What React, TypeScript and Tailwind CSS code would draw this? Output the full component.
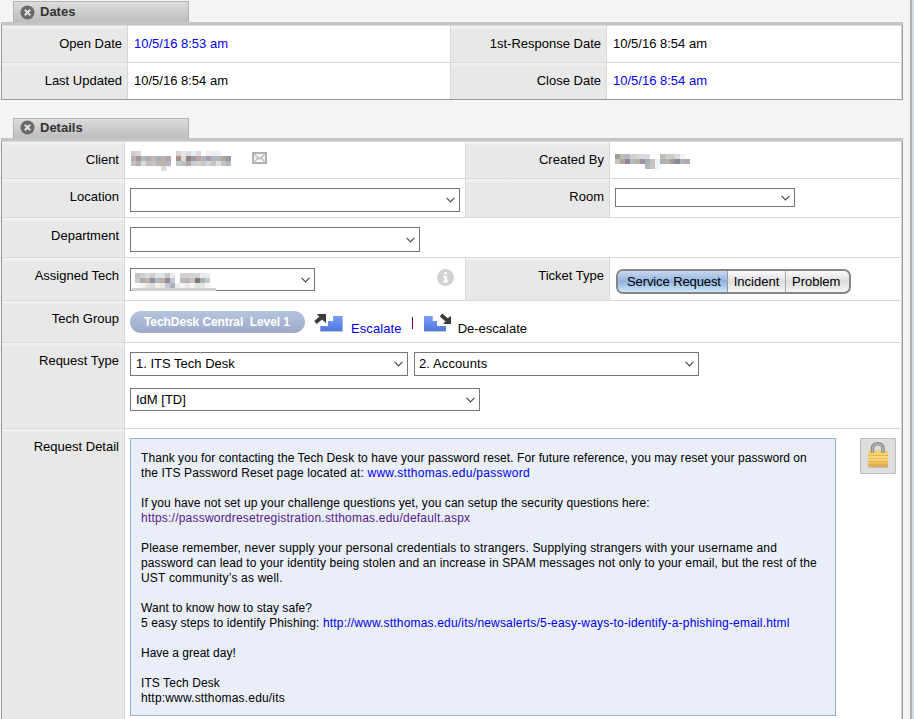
import React from "react";
import { clsx } from "clsx";

const LINK = "text-[#0000ee]";

function Tab({ title, tall }: { title: string; tall?: boolean }) {
  return (
    <div
      className={clsx(
        "ml-3 flex w-[176px] items-center border border-b-0 border-[#b4b4b4] bg-linear-to-b from-[#dcdcdc] to-[#bdbdbd] pl-[6px]",
        tall ? "h-[21px]" : "h-[20px] pb-[2px]",
      )}
    >
      <svg width="15" height="15" viewBox="0 0 15 15" className="shrink-0">
        <circle cx="7.5" cy="7.5" r="7" fill="#6a6a6a" />
        <path d="M4.8 4.8l5.4 5.4M10.2 4.8l-5.4 5.4" stroke="#e2e2e2" strokeWidth="2" />
      </svg>
      <span className="ml-[5px] text-[13px] leading-[16px] font-bold text-[#333]">{title}</span>
    </div>
  );
}

function Label({ children, className }: { children: React.ReactNode; className: string }) {
  return (
    <div
      className={clsx(
        "shrink-0 border-r border-r-[#d8d8d8] bg-[#e8e8e8] bg-linear-to-b from-[#f4f4f4] from-0% to-[#e8e8e8] to-[4px] text-right leading-[16px] whitespace-nowrap",
        className,
      )}
    >
      {children}
    </div>
  );
}

function Row({ children, className }: { children: React.ReactNode; className: string }) {
  return (
    <div className={clsx("flex border-r border-b border-[#d8d8d8] bg-white", className)}>{children}</div>
  );
}

function Chevron({ className }: { className?: string }) {
  return (
    <svg width="9" height="6" viewBox="0 0 9 6" fill="none" className={className}>
      <path d="M0.6 0.9L4.5 4.8L8.4 0.9" stroke="#4a4a4a" strokeWidth="1.2" />
    </svg>
  );
}

function Select({ children, className }: { children?: React.ReactNode; className: string }) {
  return (
    <div
      className={clsx(
        "flex shrink-0 items-center justify-between border border-[#777] bg-white pr-[4px] leading-[16px]",
        className,
      )}
    >
      <span>{children}</span>
      <Chevron />
    </div>
  );
}

function Mosaic({ rows, className }: { rows: string[][]; className?: string }) {
  return (
    <svg
      width={rows[0].length * 5}
      height={rows.length * 5}
      className={clsx("shrink-0", className)}
      shapeRendering="crispEdges"
    >
      {rows.map((r, y) =>
        r.map((c, x) => <rect key={`${x}-${y}`} x={x * 5} y={y * 5} width="5" height="5" fill={`#${c}`} />),
      )}
    </svg>
  );
}

const CLIENT = [
  "d0cbc9 dcd4d4 fff fff fff fff fff fff fff d6d6d6 e8e4e4 d8dce2 e2eef0 dcdce4 fff f2f2f2 e6eef0 f0f0f0 fff fff",
  "b8b0b0 a89498 a8bcc4 b8a8b4 c4b4b4 a4b0b8 c0b0b0 b4a4b4 fff a89484 dcdce0 948484 9c9ca8 c0a4a4 b4b4bc a89cb0 b8b4bc b0b8bc b4a49c 909cac",
  "c8c0c0 b8b0b4 d4dcdc c4bcc4 c8c0c0 bcb4b4 bcb8a0 b0b4c4 fff c0c8cc c4bcbc aca8a8 c8d0d4 d8d0c8 c8c4cc d4d4dc ccc0bc d8dcdc c0c4c8 b0b4bc",
  "fff fff fff fff fff fff d8dcdc f8fcff fff fff fff fff fff fff fff fff fff fff fff",
].map((r) => r.split(" "));

const CREATOR = [
  "a49c94 c0bcb4 b4b8c4 ccd0d4 d4d4d0 dcdcdc d8dce0 fff fff c0bcb4 c8ccd4 d4ccc4 d8dce4 f0f0f0 fff",
  "c8c4bc aca8a0 988498 b0c0c0 b8b0a0 9c90a8 a8b0b8 c8c0bc f0f4ff b0b0b0 b4b4b8 a09c90 8c889c b0b4bc b4a8b0",
  "fff fff fff fff fff fff b0b8b8 c8c4c4 eef2ff fff fff fff fff fff fff",
].map((r) => r.split(" "));

const TECH = [
  "c4c0bc ccd0d4 d8dce0 d0ccc8 e0e4e4 dce4e8 ccc8c0 e8ecf0 fff d0d0cc d4ccc8 d0d4d8 d8d0cc e8ecee e4ecee",
  "d0ccc8 a8b0b4 c0b4a8 9890a4 b0bcc4 c0b0a0 8890a4 c4c8d0 fff bcb8bc b4b4bc c8c4c0 88747c a8b4b4 c4ccd0",
  "fff f4f4f4 e8e4e0 dcdcdc f0ece8 e4e8e8 c8ccd0 a8b0b8 ececec f4f4f4 eee8e4 f4f4f4 dde4e8 e8e4e4 f4f4f4",
].map((r) => r.split(" "));

function Stairs({ down }: { down?: boolean }) {
  const id = down ? "stairs-down" : "stairs-up";
  return (
    <svg width="29" height="20" viewBox="0 0 29 20" className="shrink-0">
      <defs>
        <linearGradient id={id} x1="0" y1="0" x2="0" y2="1">
          <stop offset="0" stopColor="#7b9df5" />
          <stop offset="1" stopColor="#4f77dc" />
        </linearGradient>
      </defs>
      {down ? (
        <>
          <path d="M1 19V3h8.600v5h4.400v5h9v6z" fill="#9aa5b8" opacity=".6" />
          <path d="M1 18V3h8.600v5h4.400v5h9v5z" fill={`url(#${id})`} />
          <path d="M18 2l7 6" stroke="#3c3c3c" strokeWidth="3.800" />
          <path d="M28 11h-8l3-3 2-3 3-2z" fill="#3c3c3c" />
        </>
      ) : (
        <>
          <path d="M6 19v-6h8V8h5V3h9.500v16z" fill="#9aa5b8" opacity=".6" />
          <path d="M6.500 18v-5H14V8h5V3h9.500v15z" fill={`url(#${id})`} />
          <path d="M1.500 9.500l7-6" stroke="#3c3c3c" strokeWidth="3.800" />
          <path d="M3 1h9v9L8.500 7 5.500 4z" fill="#3c3c3c" />
        </>
      )}
    </svg>
  );
}

export default function App() {
  return (
    <div className="flex h-[719px] w-[914px] overflow-hidden bg-[#f4f4f4] font-['Liberation_Sans',Arial,sans-serif] text-[13px] text-black">
      <main className="w-[902px] shrink-0 pt-px pl-px">
        <Tab title="Dates" tall />
        <section className="w-[902px] border-t-[3px] border-t-[#c4c4c4]">
          <div className="border border-t-0 border-[#999]">
            <div className="h-px bg-[#dcdcdc]" />
            <Row className="h-[37px]">
              <Label className="w-[126px] pt-[10px] pr-[5px]">Open Date</Label>
              <div className={clsx("w-[322px] pt-[10px] pl-[6px] leading-[16px]", LINK)}>10/5/16 8:53 am</div>
              <Label className="w-[157px] border-l border-l-[#d8d8d8] pt-[10px] pr-[5px]">1st-Response Date</Label>
              <div className="pt-[10px] pl-[6px] leading-[16px]">10/5/16 8:54 am</div>
            </Row>
            <Row className="h-[36px] border-b-0">
              <Label className="w-[126px] pt-[10px] pr-[5px]">Last Updated</Label>
              <div className="w-[322px] pt-[10px] pl-[6px] leading-[16px]">10/5/16 8:54 am</div>
              <Label className="w-[157px] border-l border-l-[#d8d8d8] pt-[10px] pr-[5px]">Close Date</Label>
              <div className={clsx("pt-[10px] pl-[6px] leading-[16px]", LINK)}>10/5/16 8:54 am</div>
            </Row>
          </div>
        </section>

        <div className="h-[18px]" />
        <Tab title="Details" />
        <section className="w-[902px] border-t-[3px] border-t-[#c4c4c4]">
          <div className="border-x border-[#999]">
            <div className="h-px bg-[#dcdcdc]" />
            <Row className="h-[37px]">
              <Label className="w-[123px] pt-[10px] pr-[5px]">Client</Label>
              <div className="flex w-[340px] items-start pl-[6px]">
                <Mosaic rows={CLIENT} className="mt-[9px]" />
                <svg width="15" height="12" viewBox="0 0 15 12" className="mt-[10px] ml-[21px]">
                  <rect x="1" y="1" width="13" height="10" fill="#f4f4f4" stroke="#b0b0b0" strokeWidth="2" />
                  <path d="M2.500 2.500l5 4.500 5-4.500M2.500 9.500l3.500-3.500M12.500 9.500L9 6" fill="none" stroke="#b4b4b4" strokeWidth="1.100" />
                </svg>
              </div>
              <Label className="w-[145px] border-l border-l-[#d8d8d8] pt-[10px] pr-[5px]">Created By</Label>
              <Mosaic rows={CREATOR} className="mt-[12px] ml-[5px]" />
            </Row>
            <Row className="h-[39px]">
              <Label className="w-[123px] pt-[10px] pr-[5px]">Location</Label>
              <div className="w-[340px] pt-[9px] pl-[5px]">
                <Select className="h-[24px] w-[330px]" />
              </div>
              <Label className="w-[145px] border-l border-l-[#d8d8d8] pt-[10px] pr-[5px]">Room</Label>
              <div className="pt-[9px] pl-[5px]">
                <Select className="h-[19px] w-[180px]" />
              </div>
            </Row>
            <Row className="h-[40px]">
              <Label className="w-[123px] pt-[10px] pr-[5px]">Department</Label>
              <div className="pt-[9px] pl-[5px]">
                <Select className="h-[25px] w-[290px]" />
              </div>
            </Row>
            <Row className="h-[43px]">
              <Label className="w-[123px] pt-[10px] pr-[5px]">Assigned Tech</Label>
              <div className="flex w-[340px] items-start pt-[10px] pl-[5px]">
                <div className="flex h-[23px] w-[185px] items-start justify-between border border-[#777] pr-[4px]">
                  <div className="ml-px h-[22px] w-[84px] border-b-[3px] border-[#d2d2d2] pt-[4px] pl-[3px]">
                    <Mosaic rows={TECH} />
                  </div>
                  <Chevron className="mt-[8px]" />
                </div>
                <svg width="17" height="17" viewBox="0 0 17 17" className="mt-px ml-[122px]">
                  <circle cx="8.5" cy="8.5" r="8.500" fill="#d2d2d2" />
                  <path d="M7.300 3h2.700v2.200H7.300zM6 6.800h4V12h1.200v1.400H6V12h1.300V8.200H6z" fill="#fff" />
                </svg>
              </div>
              <Label className="w-[145px] border-l border-l-[#d8d8d8] pt-[10px] pr-[5px]">Ticket Type</Label>
              <div className="pt-[11px] pl-[6px]">
                <div className="flex h-[25px] w-[235px] overflow-hidden rounded-[7px] border-2 border-[#858585] bg-linear-to-b from-[#fafafa] via-[#dedede] to-[#f5f5f5] leading-[21px] whitespace-nowrap">
                  <div className="w-[110px] border-r border-[#999] bg-linear-to-b from-[#c9d7ee] via-[#92b3dd] to-[#cbe7f8] pl-[9px] tracking-[-0.1px]">
                    Service Request
                  </div>
                  <div className="w-[58px] border-r border-[#aaa] text-center">Incident</div>
                  <div className="flex-1 pl-[6px]">Problem</div>
                </div>
              </div>
            </Row>
            <Row className="h-[42px]">
              <Label className="w-[123px] pt-[10px] pr-[5px]">Tech Group</Label>
              <div className="flex items-start pl-[5px] whitespace-nowrap">
                <div className="mt-[10px] h-[22px] w-[175px] rounded-full bg-linear-to-b from-[#b5c5df] to-[#9da9c9] pl-[14px] text-[12px] leading-[22px] font-bold tracking-[-0.08px] whitespace-pre text-white">
                  {"TechDesk Central  Level 1"}
                </div>
                <div className="mt-[12px] ml-[9px]">
                  <Stairs />
                </div>
                <span className={clsx("mt-[20px] ml-[8px] leading-[16px] tracking-[0.1px]", LINK)}>Escalate</span>
                <div className="mt-[16px] ml-[10px] h-[12px] w-px bg-[#700050]" />
                <div className="mt-[12px] ml-[10px]">
                  <Stairs down />
                </div>
                <span className="mt-[20px] ml-[6px] leading-[16px]">De-escalate</span>
              </div>
            </Row>
            <Row className="h-[86px]">
              <Label className="w-[123px] pt-[10px] pr-[5px]">Request Type</Label>
              <div className="pt-[9px] pl-[5px]">
                <div className="flex gap-[6px]">
                  <Select className="h-[24px] w-[278px] pl-[5px]">1. ITS Tech Desk</Select>
                  <Select className="h-[24px] w-[285px] pl-[4px] tracking-[0.1px]">2. Accounts</Select>
                </div>
                <Select className="mt-[12px] h-[23px] w-[350px] pl-[5px]">IdM [TD]</Select>
              </div>
            </Row>
            <Row className="h-[290px] border-b-0">
              <Label className="w-[123px] pt-[10px] pr-[5px]">Request Detail</Label>
              <div className="flex items-start pt-[9px] pl-[5px]">
                <div className="h-[278px] w-[706px] border border-[#94b1dc] bg-[#e9eef8] pt-[12px] pl-[10px] text-[12px] leading-[15px] whitespace-nowrap">
                  <p className="tracking-[0.07px]">Thank you for contacting the Tech Desk to have your password reset. For future reference, you may reset your password on</p>
                  <p className="tracking-[0.125px]">the ITS Password Reset page located at: <span className={clsx("tracking-[0.28px]", LINK)}>www.stthomas.edu/password</span></p>
                  <br />
                  <p className="tracking-[0.075px]">If you have not set up your challenge questions yet, you can setup the security questions here:</p>
                  <p className="tracking-[0.21px] text-[#551a8b]">https://passwordresetregistration.stthomas.edu/default.aspx</p>
                  <br />
                  <p className="tracking-[0.17px]">Please remember, never supply your personal credentials to strangers. Supplying strangers with your username and</p>
                  <p className="tracking-[0.105px]">password can lead to your identity being stolen and an increase in SPAM messages not only to your email, but the rest of the</p>
                  <p className="tracking-[0.2px]">UST community’s as well.</p>
                  <br />
                  <p className="tracking-[0.07px]">Want to know how to stay safe?</p>
                  <p className="tracking-[0.11px]">5 easy steps to identify Phishing: <span className={clsx("tracking-[0.18px]", LINK)}>http://www.stthomas.edu/its/newsalerts/5-easy-ways-to-identify-a-phishing-email.html</span></p>
                  <br />
                  <p>Have a great day!</p>
                  <br />
                  <p className="tracking-[0.08px]">ITS Tech Desk</p>
                  <p className="tracking-[0.18px]">http:www.stthomas.edu/its</p>
                </div>
                <div className="ml-[24px] flex h-[36px] w-[36px] items-start justify-center border border-[#bdbdbd] bg-[#dedede] pt-[2px]">
                  <svg width="24" height="28" viewBox="0 0 24 28">
                    <defs>
                      <linearGradient id="brass" x1="0" y1="0" x2="0" y2="1">
                        <stop offset="0" stopColor="#f5cd62" />
                        <stop offset=".5" stopColor="#fbdc86" />
                        <stop offset="1" stopColor="#e5ad43" />
                      </linearGradient>
                    </defs>
                    <rect x="2" y="25" width="20" height="1.500" fill="#b0aca4" />
                    <rect x="2" y="9.500" width="20" height="16" rx="1" fill="url(#brass)" />
                    <path d="M6.500 12V7.500C6.500 1 17 1 17 7.500V12" fill="none" stroke="#858585" strokeWidth="3.500" />
                    <path d="M6.500 12V7.500C6.500 1.500 17 1.500 17 7.500V12" fill="none" stroke="#b9b9b9" strokeWidth="1.500" />
                    <path d="M2 14.500h20M2 17.500h20M2 20.500h20M2 23.500h20" stroke="#dfa740" strokeWidth=".7" />
                  </svg>
                </div>
              </div>
            </Row>
          </div>
        </section>
      </main>
      <div className="ml-[8px] w-[2px] shrink-0 bg-[#b0b0b0]" />
      <div className="w-[2px] shrink-0 bg-[#d2e0e5]" />
    </div>
  );
}
